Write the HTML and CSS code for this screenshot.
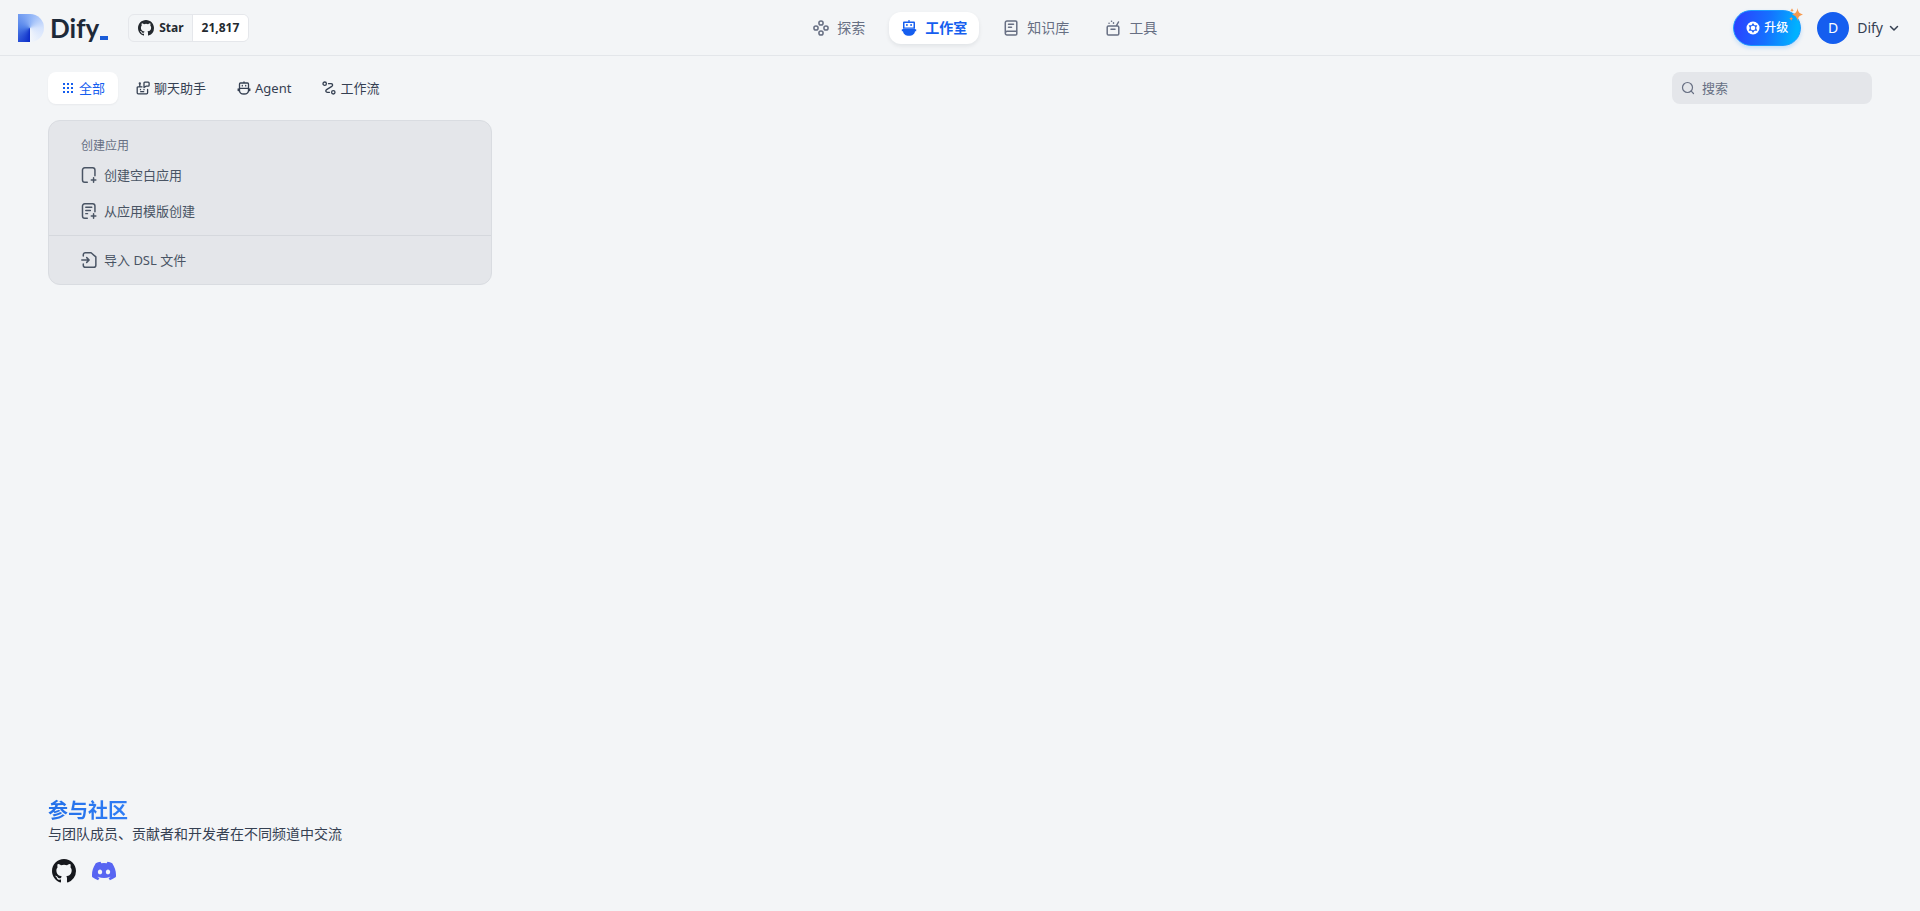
FILE: index.html
```html
<!DOCTYPE html>
<html lang="zh-Hans">
<head>
    <meta charset="UTF-8">
    <meta name="viewport" content="width=device-width, initial-scale=1.0">
    <title>工作室 - Dify</title>
    <link rel="stylesheet" href="styles.css">
</head>
<body>
    <header class="header">
        <div class="header-left">
            <a class="logo" href="#">
                <span class="logo-mark"></span>
                <span class="logo-text">Dify</span>
                <span class="logo-cursor"></span>
            </a>
            <a class="star" href="#">
                <span class="star-label">
                    <svg width="16" height="16" viewBox="0 0 16 16" fill="currentColor" aria-hidden="true"><path d="M8 0C3.58 0 0 3.58 0 8c0 3.54 2.29 6.53 5.47 7.59.4.07.55-.17.55-.38 0-.19-.01-.82-.01-1.49-2.01.37-2.53-.49-2.69-.94-.09-.23-.48-.94-.82-1.13-.28-.15-.68-.52-.01-.53.63-.01 1.08.58 1.23.82.72 1.21 1.87.87 2.33.66.07-.52.28-.87.51-1.07-1.78-.2-3.64-.89-3.64-3.95 0-.87.31-1.59.82-2.15-.08-.2-.36-1.02.08-2.12 0 0 .67-.21 2.2.82a7.6 7.6 0 014 0c1.53-1.04 2.2-.82 2.2-.82.44 1.1.16 1.92.08 2.12.51.56.82 1.27.82 2.15 0 3.07-1.87 3.75-3.65 3.95.29.25.54.73.54 1.48 0 1.07-.01 1.93-.01 2.2 0 .21.15.46.55.38A8.01 8.01 0 0016 8c0-4.42-3.58-8-8-8z"/></svg>
                    Star
                </span>
                <span class="star-count">21,817</span>
            </a>
        </div>

        <nav class="nav">
            <a class="nav-item" href="#">
                <svg width="16" height="16" viewBox="0 0 16 16" fill="none" stroke="currentColor" stroke-width="1.5" aria-hidden="true">
                    <circle cx="8" cy="3" r="2.1"/><circle cx="8" cy="13" r="2.1"/><circle cx="3" cy="8" r="2.1"/><circle cx="13" cy="8" r="2.1"/>
                </svg>
                探索
            </a>
            <a class="nav-item active" href="#">
                <svg width="16" height="16" viewBox="0 0 16 16" fill="currentColor" aria-hidden="true">
                    <path fill-rule="evenodd" d="M7.4 0h1.2v1.4h4.2c.7 0 1.2.5 1.2 1.2v6H2v-6c0-.7.5-1.2 1.2-1.2h4.2zM3.5 2.9v4.6h9V2.9z"/>
                    <path d="M5.2 4h1.4v2H5.2zM9.4 4h1.4v2H9.4z"/>
                    <path d="M2 8.500h12v.7h1.200v2H14c-.3 2.800-2.700 4.600-6 4.600s-5.700-1.800-6-4.600H.8v-2H2z"/>
                </svg>
                工作室
            </a>
            <a class="nav-item" href="#">
                <svg width="16" height="16" viewBox="0 0 16 16" fill="none" stroke="currentColor" stroke-width="1.5" stroke-linecap="round" stroke-linejoin="round" aria-hidden="true">
                    <path d="M4 1h8.500c.8 0 1.300.5 1.300 1.300v11.400c0 .8-.5 1.300-1.300 1.300H4c-1 0-1.700-.7-1.700-1.700V2.700C2.300 1.700 3 1 4 1zM2.500 12.500c.2-.8.8-1.200 1.500-1.200h9.700M5.500 4.300h5M5.500 7.300h3"/>
                </svg>
                知识库
            </a>
            <a class="nav-item" href="#">
                <svg width="16" height="16" viewBox="0 0 16 16" fill="none" stroke="currentColor" stroke-width="1.5" stroke-linecap="round" stroke-linejoin="round" aria-hidden="true">
                    <path d="M3.500 6h9c.8 0 1.300.5 1.300 1.300v6.400c0 .8-.5 1.300-1.300 1.300h-9c-.8 0-1.300-.5-1.300-1.300V7.300C2.200 6.500 2.700 6 3.500 6zM6 9.300h4M11.500 5.500L13.500 2"/>
                    <path d="M4 3.300h.1M6.500 1.200h.1M8.500 3.200v-.5"/>
                </svg>
                工具
            </a>
        </nav>

        <div class="header-right">
            <button class="upgrade" type="button">
                <svg width="14" height="14" viewBox="0 0 14 14" aria-hidden="true">
                    <circle cx="7" cy="7" r="6.5" fill="#fff"/>
                    <path d="M7 2l1.500 2.300 2.800 0-1.200 2.700 1.200 2.700-2.800 0L7 12 5.500 9.700l-2.800 0L3.900 7 2.700 4.300l2.800 0z" fill="#2563f5"/>
                    <circle cx="7" cy="7" r="2.300" fill="#fff"/>
                </svg>
                升级
                <svg class="sparkle" width="14" height="14" viewBox="0 0 14 14" fill="#f79a50" aria-hidden="true">
                    <path d="M8.500 0c.8 4.200 1.700 5.400 5.500 6.500-3.800 1.100-4.700 2.300-5.500 6.500C7.700 8.800 6.800 7.600 3 6.500 6.800 5.400 7.700 4.200 8.500 0z"/>
                    <path d="M3 0c.3 1.500.7 1.900 2 2.200C3.700 2.500 3.300 2.900 3 4.400 2.700 2.900 2.300 2.500 1 2.200 2.300 1.900 2.700 1.500 3 0zM2.200 8.500c.3 1.500.7 1.900 2.100 2.200-1.400.3-1.800.7-2.100 2.200-.3-1.500-.7-1.900-2.100-2.200 1.400-.3 1.800-.7 2.100-2.200z"/>
                </svg>
            </button>
            <button class="account" type="button">
                <span class="avatar">D</span>
                <span>Dify</span>
                <svg width="12" height="12" viewBox="0 0 12 12" fill="none" stroke="currentColor" stroke-width="1.5" stroke-linecap="round" stroke-linejoin="round" aria-hidden="true"><path d="M2.500 4.500L6 8l3.500-3.500"/></svg>
            </button>
        </div>
    </header>

    <main class="main">
        <div class="toolbar">
            <div class="tabs">
                <button class="tab active" type="button">
                    <svg width="14" height="14" viewBox="0 0 14 14" fill="currentColor" aria-hidden="true">
                        <path d="M2 2h2v2H2zM6 2h2v2H6zM10 2h2v2h-2zM2 6h2v2H2zM6 6h2v2H6zM10 6h2v2h-2zM2 10h2v2H2zM6 10h2v2H6zM10 10h2v2h-2z"/>
                    </svg>
                    全部
                </button>
                <button class="tab" type="button">
                    <svg width="14" height="14" viewBox="0 0 14 14" fill="none" stroke="currentColor" stroke-width="1.3" stroke-linecap="round" stroke-linejoin="round" aria-hidden="true">
                        <path d="M6 5.800H2.200c-.6 0-1 .4-1 1v5c0 .6.400 1 1 1h8.400c.6 0 1-.4 1-1V8.500M3.800 5.600V3.200M4.500 8.300v.4M8 8.300v.4M4.700 10.700h3"/>
                        <path d="M8.800 1.200h3.400c.5 0 .9.400.9.900v2.200c0 .5-.4.900-.9.900H10L8 6.500V2c0-.5.300-.8.800-.8z"/>
                        <circle cx="3.800" cy="2.500" r=".5"/>
                    </svg>
                    聊天助手
                </button>
                <button class="tab" type="button">
                    <svg width="14" height="14" viewBox="0 0 14 14" fill="none" stroke="currentColor" stroke-width="1.3" stroke-linecap="round" stroke-linejoin="round" aria-hidden="true">
                        <path d="M7 .8v1.200M3.500 2h7c.6 0 1 .4 1 1v4.300h-9V3c0-.6.400-1 1-1zM2.500 7.300v2.200C2.500 11.700 4.400 13 7 13s4.500-1.300 4.500-3.500V7.300M1.200 7.800v1.700h1.200M12.800 7.800v1.700h-1.200M5.300 4.400v.5M8.700 4.400v.5"/>
                    </svg>
                    Agent
                </button>
                <button class="tab" type="button">
                    <svg width="14" height="14" viewBox="0 0 14 14" fill="none" stroke="currentColor" stroke-width="1.3" stroke-linecap="round" stroke-linejoin="round" aria-hidden="true">
                        <circle cx="2.700" cy="2.700" r="1.700"/><circle cx="11.300" cy="11.300" r="1.700"/>
                        <path d="M6.500 2.700h2.500c1.700 0 2.200 1.800.8 2.700L4.600 8.600c-1.400.9-.9 2.700.8 2.700H7.500"/>
                    </svg>
                    工作流
                </button>
            </div>
            <div class="search">
                <svg width="14" height="14" viewBox="0 0 14 14" fill="none" stroke="currentColor" stroke-width="1.2" stroke-linecap="round" aria-hidden="true"><circle cx="6.500" cy="6.500" r="5"/><path d="M10.200 10.200L12.500 12.500"/></svg>
                <input type="text" placeholder="搜索" aria-label="搜索">
            </div>
        </div>

        <div class="grid">
            <section class="card">
                <div class="card-section">
                    <h2 class="card-title">创建应用</h2>
                    <button class="card-item" type="button">
                        <svg width="16" height="16" viewBox="1 1 14 14" fill="none" stroke="currentColor" stroke-width="1.3" stroke-linecap="round" stroke-linejoin="round" aria-hidden="true">
                            <path d="M6.500 14.300H4.300c-1.200 0-2-.8-2-2V3.700c0-1.200.8-2 2-2h6.900c1.200 0 2 .8 2 2v5M12 10.300v4M10 12.300h4"/>
                        </svg>
                        创建空白应用
                    </button>
                    <button class="card-item" type="button">
                        <svg width="16" height="16" viewBox="1 1 14 14" fill="none" stroke="currentColor" stroke-width="1.3" stroke-linecap="round" stroke-linejoin="round" aria-hidden="true">
                            <path d="M6.500 14.300H4.300c-1.200 0-2-.8-2-2V3.700c0-1.200.8-2 2-2h6.900c1.200 0 2 .8 2 2v5M12 10.300v4M10 12.300h4M5.200 4.700h5.200M5.200 7.500h4M5.200 10.300h1.500"/>
                        </svg>
                        从应用模版创建
                    </button>
                </div>
                <div class="card-section card-import">
                    <button class="card-item" type="button">
                        <svg width="16" height="16" viewBox="1 1 14 14" fill="none" stroke="currentColor" stroke-width="1.3" stroke-linecap="round" stroke-linejoin="round" aria-hidden="true">
                            <path d="M3 4.500V3.500c0-1 .8-1.800 1.800-1.800h5L14 5.300v7.200c0 1-.8 1.800-1.800 1.800H4.800c-1 0-1.800-.8-1.800-1.800v-1M1.700 8H8M6 5.900L8.100 8 6 10.100"/>
                        </svg>
                        导入 DSL 文件
                    </button>
                </div>
            </section>
        </div>
    </main>

    <footer class="footer">
        <h3 class="footer-title">参与社区</h3>
        <p class="footer-text">与团队成员、贡献者和开发者在不同频道中交流</p>
        <div class="footer-links">
            <a class="github" href="#" aria-label="GitHub">
                <svg width="24" height="24" viewBox="0 0 16 16" fill="currentColor" aria-hidden="true"><path d="M8 0C3.58 0 0 3.58 0 8c0 3.54 2.29 6.53 5.47 7.59.4.07.55-.17.55-.38 0-.19-.01-.82-.01-1.49-2.01.37-2.53-.49-2.69-.94-.09-.23-.48-.94-.82-1.13-.28-.15-.68-.52-.01-.53.63-.01 1.08.58 1.23.82.72 1.21 1.87.87 2.33.66.07-.52.28-.87.51-1.07-1.78-.2-3.64-.89-3.64-3.95 0-.87.31-1.59.82-2.15-.08-.2-.36-1.02.08-2.12 0 0 .67-.21 2.2.82a7.6 7.6 0 014 0c1.53-1.04 2.2-.82 2.2-.82.44 1.1.16 1.92.08 2.12.51.56.82 1.27.82 2.15 0 3.07-1.87 3.75-3.65 3.95.29.25.54.73.54 1.48 0 1.07-.01 1.93-.01 2.2 0 .21.15.46.55.38A8.01 8.01 0 0016 8c0-4.42-3.58-8-8-8z"/></svg>
            </a>
            <a class="discord" href="#" aria-label="Discord">
                <svg width="24" height="24" viewBox="0 0 24 24" fill="currentColor" aria-hidden="true"><path d="M20.317 4.37a19.79 19.79 0 00-4.885-1.515.074.074 0 00-.079.037c-.21.375-.444.864-.608 1.25a18.27 18.27 0 00-5.487 0 12.64 12.64 0 00-.617-1.25.077.077 0 00-.079-.037A19.74 19.74 0 003.677 4.37a.07.07 0 00-.032.027C.533 9.046-.32 13.58.099 18.057a.082.082 0 00.031.057 19.9 19.9 0 005.993 3.03.078.078 0 00.084-.028c.462-.63.874-1.295 1.226-1.994a.076.076 0 00-.041-.106 13.1 13.1 0 01-1.872-.892.077.077 0 01-.008-.128c.126-.094.252-.192.372-.292a.074.074 0 01.077-.01c3.928 1.793 8.18 1.793 12.062 0a.074.074 0 01.078.01c.12.098.246.198.373.292a.077.077 0 01-.006.127 12.3 12.3 0 01-1.873.892.077.077 0 00-.041.107c.36.698.772 1.362 1.225 1.993a.076.076 0 00.084.028 19.84 19.84 0 006.002-3.03.077.077 0 00.032-.054c.5-5.177-.838-9.674-3.549-13.66a.061.061 0 00-.031-.03zM8.02 15.33c-1.183 0-2.157-1.085-2.157-2.419 0-1.333.956-2.419 2.157-2.419 1.21 0 2.176 1.096 2.157 2.42 0 1.333-.956 2.418-2.157 2.418zm7.975 0c-1.183 0-2.157-1.085-2.157-2.419 0-1.333.955-2.419 2.157-2.419 1.21 0 2.176 1.096 2.157 2.42 0 1.333-.946 2.418-2.157 2.418z"/></svg>
            </a>
        </div>
    </footer>
</body>
</html>
```
FILE: styles.css
```css
* {
    box-sizing: border-box;
}

body {
    display: flex;
    flex-direction: column;
    min-height: 100vh;
    margin: 0;
    background-color: #f3f5f7;
    color: #354052;
    font-family: "Noto Sans", "Noto Sans CJK SC", sans-serif;
    font-size: 14px;
    line-height: 20px;
}

a {
    color: inherit;
    text-decoration: none;
}

button {
    display: flex;
    align-items: center;
    padding: 0;
    border: none;
    background: none;
    color: inherit;
    font: inherit;
    cursor: pointer;
}

svg {
    flex-shrink: 0;
}

/* Header */
.header {
    display: flex;
    align-items: center;
    justify-content: space-between;
    height: 56px;
    padding: 0 20px 0 18px;
    border-bottom: 1px solid #e3e6ea;
}

.header-left {
    display: flex;
    align-items: center;
    gap: 20px;
}

.logo {
    display: flex;
    align-items: center;
}

.logo-mark {
    width: 26px;
    height: 28px;
    border-radius: 0 14px 14px 0;
    background: conic-gradient(from 180deg at 12px 14px, #0a2bc8, #4f7fe8 25%, #8db2f7 50%, #d5e3fd 75%, #f3f6fb);
}

.logo-text {
    margin-left: 6px;
    color: #1d2939;
    font-family: Lato, sans-serif;
    font-size: 26px;
    font-weight: bold;
    line-height: 28px;
}

.logo-cursor {
    align-self: flex-end;
    width: 8px;
    height: 4px;
    margin: 0 0 2px 1px;
    background-color: #1a5cd8;
}

.star {
    display: flex;
    border: 1px solid #e5e7eb;
    border-radius: 6px;
    overflow: hidden;
    color: #24292f;
    font-size: 12px;
    font-weight: bold;
    line-height: 26px;
}

.star-label {
    display: flex;
    align-items: center;
    gap: 5px;
    padding: 0 8px 0 9px;
    border-right: 1px solid #e5e7eb;
}

.star-count {
    padding: 0 9px;
    background-color: #fff;
}

.nav {
    display: flex;
    gap: 12px;
}

.nav-item {
    display: flex;
    align-items: center;
    gap: 8px;
    height: 32px;
    padding: 0 12px;
    border-radius: 12px;
    color: #676f83;
}

.nav-item.active {
    background-color: #fff;
    box-shadow: 0 2px 4px rgba(16, 24, 40, 0.08);
    color: #155eef;
    font-weight: bold;
}

.header-right {
    display: flex;
    align-items: center;
    gap: 16px;
    padding-left: 12px;
}

.upgrade {
    position: relative;
    gap: 4px;
    height: 36px;
    padding: 0 12px;
    border: 1px solid #1b9bff;
    border-radius: 18px;
    background: linear-gradient(100deg, #2b41ff 5%, #1570ff 50%, #00b2ff 90%);
    background-origin: border-box;
    box-shadow: 0 2px 4px rgba(0, 130, 255, 0.2);
    color: #fff;
    font-size: 12px;
    font-weight: 500;
}

.sparkle {
    position: absolute;
    top: -3px;
    right: -3px;
}

.account {
    gap: 8px;
}

.account svg {
    margin-left: -3px;
}

.avatar {
    width: 32px;
    border-radius: 50%;
    background-color: #155eef;
    color: #fff;
    line-height: 32px;
    text-align: center;
}

/* Tabs and search */
.main {
    padding: 16px 48px;
}

.toolbar {
    display: flex;
    justify-content: space-between;
    font-size: 13px;
}

.tabs {
    display: flex;
    gap: 5px;
}

.tab {
    gap: 4px;
    height: 32px;
    padding: 0 13px;
    border-radius: 8px;
}

.tab.active {
    background-color: #fff;
    box-shadow: 0 1px 2px rgba(16, 24, 40, 0.05);
    color: #155eef;
}

.search {
    display: flex;
    align-items: center;
    gap: 7px;
    width: 200px;
    height: 32px;
    padding: 0 9px;
    border-radius: 8px;
    background-color: #e4e6ea;
    color: #676f83;
}

.search input {
    flex: 1;
    min-width: 0;
    padding: 0;
    border: none;
    outline: none;
    background: none;
    color: #354052;
    font: inherit;
}

.search input::placeholder {
    color: #676f83;
}

/* App cards */
.grid {
    display: grid;
    grid-template-columns: repeat(4, 1fr);
    gap: 16px;
    margin-top: 16px;
}

.card {
    border: 1px solid #d9dce1;
    border-radius: 12px;
    background-color: #e4e6ea;
    color: #495464;
    font-size: 13px;
}

.card-section {
    padding: 16px 8px 6px;
}

.card-import {
    padding: 6px 8px;
    border-top: 1px solid #d5d8dd;
}

.card-title {
    margin: 0 0 2px;
    padding: 0 24px;
    color: #676f83;
    font-size: 12px;
    font-weight: normal;
    line-height: 18px;
}

.card-item {
    gap: 7px;
    width: 100%;
    height: 36px;
    padding: 0 24px;
}

/* Footer */
.footer {
    margin-top: auto;
    padding: 0 48px 28px;
}

.footer-title {
    width: fit-content;
    margin: 0;
    background: linear-gradient(90deg, #2470e8, #2f7df5);
    background-clip: text;
    color: transparent;
    font-size: 20px;
    line-height: 26px;
}

.footer-text {
    margin: 0;
}

.footer-links {
    display: flex;
    gap: 16px;
    margin-top: 15px;
    padding: 0 4px;
}

.footer-links svg {
    display: block;
}

.github {
    color: #16181d;
}

.discord {
    color: #5865f2;
}
```
